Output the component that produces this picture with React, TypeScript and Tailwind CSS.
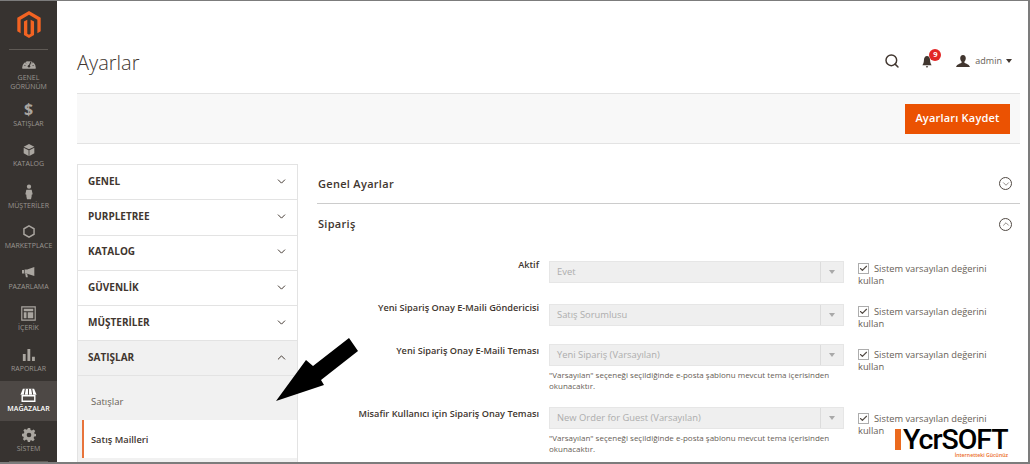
import React from "react";
import { ChevronDown, ChevronUp, Search, Check } from "lucide-react";

const font = { fontFamily: '"Open Sans", "Noto Sans", sans-serif' };

const Gauge = () => (
  <svg width="16" height="11" viewBox="0 0 22 16"><path d="M1 14.500a10 10 0 1 1 20 0q0 1-1 1H2q-1 0-1-1z" fill="#aaa6a0" /><path d="M11 12l3-7" stroke="#373330" strokeWidth="1.500" /><circle cx="11" cy="12" r="1.800" fill="#373330" /><path d="M4 11h2M5.500 6.500l1.500 1.300M11 3.500v2M16.500 6.500L15 7.800M18 11h-2" stroke="#373330" strokeWidth="1" /></svg>
);
const Dollar = () => <span className="text-[16px] leading-[17px] font-bold text-[#aaa6a0]">$</span>;
const Box = () => (
  <svg width="12" height="14" viewBox="0 0 18 20"><path d="M9 1l8 4-8 4-8-4z" fill="#aaa6a0" /><path d="M1 6.500l7.400 3.700V19L1 15z" fill="#aaa6a0" /><path d="M17 6.500l-7.400 3.700V19l7.400-4z" fill="#aaa6a0" /></svg>
);
const Person = () => (
  <svg width="8" height="16" viewBox="0 0 12 23"><circle cx="6" cy="3.500" r="3.200" fill="#aaa6a0" /><path d="M2 8h8l1.500 7-1.500.5V18l-1 4.500H3L2 18v-2.500L.5 15z" fill="#aaa6a0" /></svg>
);
const Hex = () => (
  <svg width="12" height="13" viewBox="0 0 16 18"><path d="M8 1.200l7 4v7.600l-7 4-7-4V5.200z" fill="none" stroke="#aaa6a0" strokeWidth="2" /></svg>
);
const Megaphone = () => (
  <svg width="15" height="11" viewBox="0 0 22 17"><path d="M20 0v14L9 10.500H5V4h4z" fill="#aaa6a0" /><path d="M1 4.500h3V10H1zM6 11h3l1 5H7z" fill="#aaa6a0" /></svg>
);
const Layout = () => (
  <svg width="15" height="15" viewBox="0 0 19 19"><path d="M1 1h17v17H1z" fill="none" stroke="#aaa6a0" strokeWidth="1.500" /><path d="M3.500 3.500h12v3h-12zM3.500 8h3.500v7.500H3.500zM8.500 8h7v7.500h-7z" fill="#aaa6a0" /></svg>
);
const Bars = () => (
  <svg width="13" height="12" viewBox="0 0 18 17"><path d="M1 7h4v10H1zM7.500 0h4v17h-4zM14 11h4v6h-4z" fill="#aaa6a0" /></svg>
);
const Store = () => (
  <svg width="17" height="14" viewBox="0 0 24 20"><path d="M4 1h16l3.500 8.500H.5z" fill="#fff" /><path d="M7.500 1L6 9.500M12 1v8.500M16.500 1L18 9.500" stroke="#4a4542" strokeWidth="1.500" /><path d="M3 11h18v8H3z" fill="none" stroke="#fff" strokeWidth="2" /></svg>
);
const Gear = () => (
  <svg width="14" height="14" viewBox="0 0 24 24"><path fillRule="evenodd" d="M10 0h4l.7 3.300 2.300 1 2.900-1.800 2.800 2.800-1.800 2.900 1 2.300L24 10v4l-3.100.7-1 2.300 1.800 2.900-2.800 2.800-2.900-1.800-2.300 1L14 24h-4l-.7-3.100-2.300-1-2.900 1.800-2.800-2.800L3.100 17l-1-2.300L0 14v-4l3.100-.7 1-2.300-1.800-2.900 2.800-2.800L7 3.100l2.300-1zM12 8a4 4 0 1 0 0 8 4 4 0 0 0 0-8z" fill="#aaa6a0" /></svg>
);

const Logo = () => (
  <svg width="24" height="27" viewBox="0 0 26 30"><path fill="#f26322" d="M13 0L0 7.500v15l3.700 2.100V9.700L13 4.300l9.300 5.400v14.900l3.700-2.100v-15z" /><path fill="#f26322" d="M14.800 25.400l-1.800 1-1.900-1V9.700L7.400 11.800v14.900L13 30l5.600-3.300V11.800l-3.800-2.100z" /></svg>
);

const nav: { icon: React.ReactNode; label: React.ReactNode; h: string; active?: boolean }[] = [
  { icon: <Gauge />, label: <>GENEL<br />GÖRÜNÜM</>, h: "h-[49px]" },
  { icon: <Dollar />, label: "SATIŞLAR", h: "h-[37px]" },
  { icon: <Box />, label: "KATALOG", h: "h-[40px]" },
  { icon: <Person />, label: "MÜŞTERİLER", h: "h-[42px]" },
  { icon: <Hex />, label: "MARKETPLACE", h: "h-[40px]" },
  { icon: <Megaphone />, label: "PAZARLAMA", h: "h-[41px]" },
  { icon: <Layout />, label: "İÇERİK", h: "h-[41px]" },
  { icon: <Bars />, label: "RAPORLAR", h: "h-[41px]" },
  { icon: <Store />, label: "MAĞAZALAR", h: "h-[40px]", active: true },
  { icon: <Gear />, label: "SİSTEM", h: "h-[40px]" },
];

const tabs = ["GENEL", "PURPLETREE", "KATALOG", "GÜVENLİK", "MÜŞTERİLER"];

const rows = [
  { label: "Aktif", value: "Evet", h: "h-[43px]", lab: "-mt-[3px]", chk: "pt-[1px]" },
  { label: "Yeni Sipariş Onay E-Maili Göndericisi", value: "Satış Sorumlusu", h: "h-[40px]", lab: "-mt-[3px]", chk: "pt-[1px]" },
  { label: "Yeni Sipariş Onay E-Maili Teması", value: "Yeni Sipariş (Varsayılan)", h: "h-[63px]", note: true, lab: "", chk: "pt-[4px]" },
  { label: "Misafir Kullanıcı için Sipariş Onay Teması", value: "New Order for Guest (Varsayılan)", h: "h-[60px]", note: true, lab: "", chk: "pt-[5px]" },
];

function ChevronInCircle({ down }: { down?: boolean }) {
  return (
    <span className="flex h-[13px] w-[13px] items-center justify-center rounded-full border border-[#514943] text-[#514943]">
      {down ? <ChevronDown size={10} strokeWidth={1.500} /> : <ChevronUp size={10} strokeWidth={1.500} />}
    </span>
  );
}

export default function App() {
  return (
    <div style={font} className="relative flex h-[464px] w-[1030px] overflow-hidden border-t border-r-2 border-b-2 border-[#7c7c7c] bg-white text-[#41362f]">
      <aside className="flex h-full w-[57px] shrink-0 flex-col items-center bg-[#373330]">
        <div className="mt-[10px] flex h-[27px] items-center justify-center"><Logo /></div>
        <div className="mt-[11px] h-px w-[39px] bg-[#5f5a55]" />
        {nav.map((n, i) => (
          <div key={i} className={`flex w-full shrink-0 flex-col items-center justify-end pb-[8px] text-center text-[7px] leading-[9px] ${n.h} ${n.active ? "bg-[#4d4845] font-semibold text-white" : "text-[#9a9690]"}`}>
            <div className="mb-[1px] flex h-[17px] items-center justify-center">{n.icon}</div>
            <div className="whitespace-nowrap">{n.label}</div>
          </div>
        ))}
        <div className="h-px w-[39px] bg-[#5f5a55]" />
      </aside>

      <main className="flex min-w-0 flex-1 flex-col pl-5 pr-2">
        <header className="flex h-[92px] items-center justify-between pt-[32px]">
          <h1 className="text-[20px] font-light text-[#41362f]">Ayarlar</h1>
          <div className="-mt-[4px] flex items-center pr-[8px]">
            <Search size={16} strokeWidth={2.200} className="mr-[22px] text-[#41362f]" />
            <div className="relative mr-[24px] w-[10px]">
              <svg width="10" height="12" viewBox="0 0 13 13" className="mt-[2px]" preserveAspectRatio="none"><path d="M6.500 0C4 0 2.500 2 2.500 4.500 2.500 7.500 1 9 .5 10h12c-.5-1-2-2.500-2-5.500C10.500 2 9 0 6.500 0zM5 11h3a1.500 1.500 0 0 1-3 0z" fill="#41362f" /></svg>
              <span className="absolute -top-[5px] left-[7px] flex h-[12px] w-[12px] items-center justify-center rounded-full bg-[#e22626] text-[7.500px] font-bold text-white">9</span>
            </div>
            <svg width="14" height="13" viewBox="0 0 15 14" className="mr-[5px]"><path d="M7.500 0c2 0 3 1.500 3 3.500 0 1.500-.7 3-1.500 3.700v1c.5 1.200 5 1.500 6 4.800H0c1-3.300 5.500-3.600 6-4.800v-1c-.8-.7-1.500-2.200-1.500-3.700 0-2 1-3.500 3-3.500z" fill="#41362f" /></svg>
            <span className="text-[9px] text-[#676056]">admin</span>
            <span className="ml-[4px] h-0 w-0 border-x-[3px] border-t-[4px] border-x-transparent border-t-[#41362f]" />
          </div>
        </header>

        <div className="flex h-[51px] items-center justify-end border-y border-[#e3e3e3] bg-[#f8f8f8] pr-[10px]">
          <button className="h-[30px] w-[105px] bg-[#eb5202] text-[11px] font-semibold tracking-[0.2px] text-white">Ayarları Kaydet</button>
        </div>

        <div className="mt-5 flex min-h-0 flex-1 items-start gap-[19px] overflow-hidden">
          <div className="w-[221px] shrink-0 border-x border-[#e3e3e3]">
            {tabs.map((t) => (
              <div key={t} className="flex h-[35.300px] items-center justify-between border-t border-[#e3e3e3] pb-[2px] pl-[10px] pr-[9px]">
                <span className="text-[10px] font-bold text-[#41362f]">{t}</span>
                <ChevronDown size={13} strokeWidth={1.800} className="text-[#41362f]" />
              </div>
            ))}
            <div className="flex h-[36px] items-center justify-between border-y border-[#e3e3e3] bg-[#f1f1f1] pb-[2px] pl-[10px] pr-[9px]">
              <span className="text-[10px] font-bold text-[#41362f]">SATIŞLAR</span>
              <ChevronUp size={13} strokeWidth={1.800} className="text-[#41362f]" />
            </div>
            <div className="flex h-[44px] items-center bg-[#f1f1f1] pl-[13px] pt-[8px] text-[9.500px] text-[#676056]">Satışlar</div>
            <div className="bg-[#f1f1f1]">
              <div className="ml-[4px] flex h-[38px] items-center border-l-2 border-[#e8743b] bg-white pl-[7px] text-[9.300px] font-semibold text-[#41362f]">Satış Mailleri</div>
            </div>
            <div className="h-[10px] bg-[#f1f1f1]" />
          </div>

          <div className="min-w-0 flex-1">
            <div className="flex h-[40px] items-center justify-between border-b border-[#cccccc] pl-px pr-[8px]">
              <span className="pt-[1px] text-[11px] font-semibold tracking-[0.3px] text-[#41362f]">Genel Ayarlar</span>
              <ChevronInCircle down />
            </div>
            <div className="flex h-[42px] items-center justify-between pb-[2px] pl-px pr-[8px]">
              <span className="text-[11px] font-semibold tracking-[0.3px] text-[#41362f]">Sipariş</span>
              <ChevronInCircle />
            </div>
            <div className="mt-[15px]">
              {rows.map((r) => (
                <div key={r.label} className={`flex ${r.h}`}>
                  <div className={`w-[222px] shrink-0 pt-[1px] text-right text-[9.200px] font-semibold leading-[12px] text-[#41362f] ${r.lab}`}>{r.label}</div>
                  <div className="ml-[10px] w-[295px] shrink-0">
                    <div className="flex h-[22px] items-center justify-between border border-[#e6e6e6] bg-[#efefef] pl-[7px] text-[9.400px] text-[#adadad]">
                      <span>{r.value}</span>
                      <span className="flex h-full w-[23px] items-center justify-center border-l border-[#dcdcdc]">
                        <span className="h-0 w-0 border-x-[3px] border-t-[4px] border-x-transparent border-t-[#a9a9a9]" />
                      </span>
                    </div>
                    {r.note && (
                      <p className="mt-[3px] text-[8px] leading-[11px] text-[#676056]">"Varsayılan" seçeneği seçildiğinde e-posta şablonu mevcut tema içerisinden okunacaktır.</p>
                    )}
                  </div>
                  <div className={`ml-[14px] w-[140px] text-[9.300px] leading-[12px] text-[#676056] ${r.chk}`}>
                    <div className="whitespace-nowrap">
                      <span className="mr-[5px] inline-flex h-[11px] w-[11px] translate-y-[1px] items-center justify-center border border-[#adadad] bg-white align-baseline">
                        <Check size={9} strokeWidth={3} className="text-[#514943]" />
                      </span>
                      Sistem varsayılan değerini
                    </div>
                    <div className="w-fit">kullan</div>
                  </div>
                </div>
              ))}
            </div>
          </div>
        </div>
      </main>

      <svg className="absolute left-[274px] top-[336px]" width="86" height="66" viewBox="0 0 86 66">
        <path d="M2 64L32 23 39 29 75 1 84 14 47 43 50 48z" fill="#000" />
      </svg>

      <div className="absolute left-[895px] top-[428px] flex w-[113px] flex-col">
        <div className="flex h-[21px] items-center">
          <span className="mr-[2px] h-[21px] w-[6px] shrink-0 bg-[#eb6a1e]" />
          <span className="whitespace-nowrap text-[28.500px] leading-[21px] font-medium tracking-[-1px] text-black" style={{ fontFamily: "Roboto, sans-serif" }}>YcrSOFT</span>
        </div>
        <span className="mt-[2px] w-full text-right text-[5.200px] leading-[6px] font-semibold text-[#eb6a1e]">İnternetteki Gücünüz</span>
      </div>
    </div>
  );
}
